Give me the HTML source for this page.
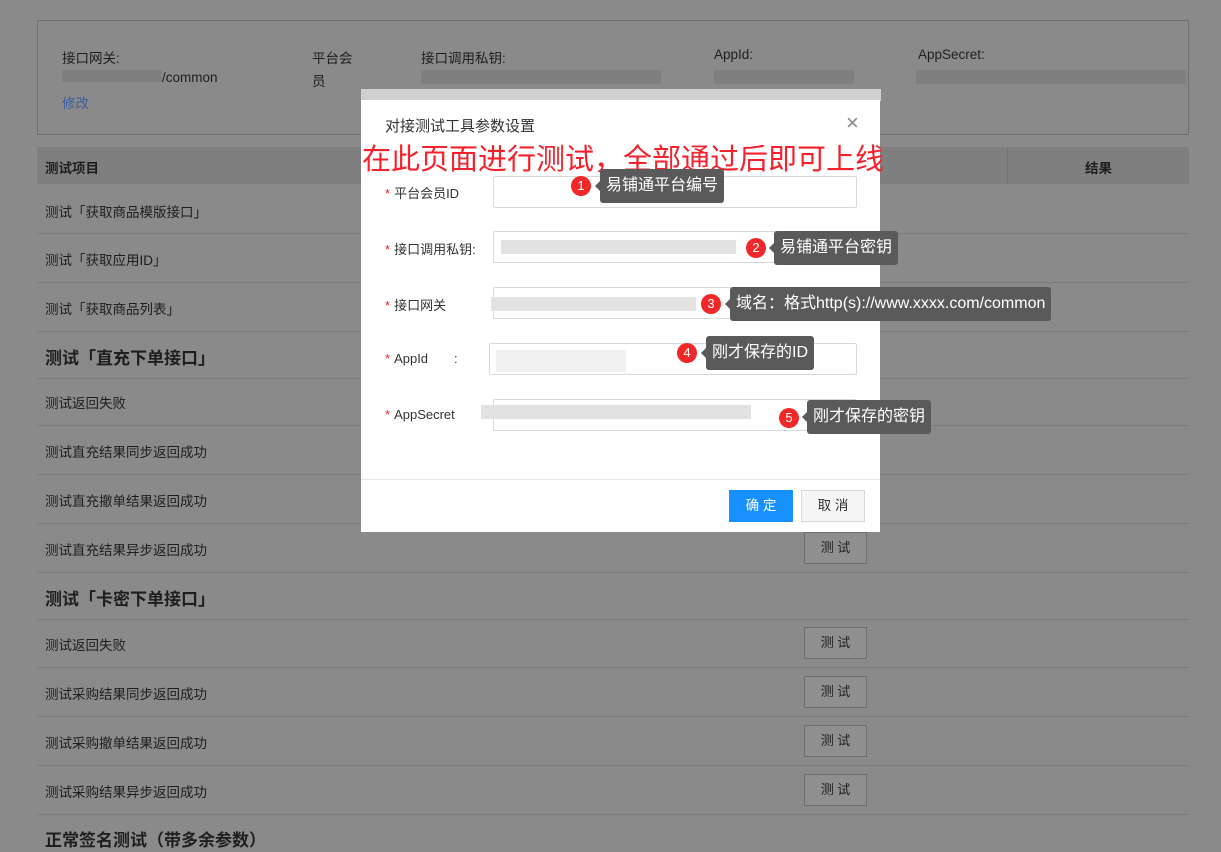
<!DOCTYPE html>
<html><head><meta charset="utf-8"><style>
*{margin:0;padding:0;box-sizing:border-box}
body{width:1221px;height:852px;overflow:hidden;background:#8a8a8a;font-family:"Liberation Sans","Noto Sans CJK SC",sans-serif;color:#1e1e1e;position:relative;font-size:13.5px}
.a{position:absolute;white-space:nowrap}
.line{position:absolute;left:37px;width:1152px;height:1px;background:#7c7c7c}
.btn{position:absolute;left:804px;width:63px;height:32px;border:1px solid #6e6e6e;background:#8f8f8f;font-size:13px;text-align:center;line-height:30px;color:#1e1e1e}
.sec{font-weight:bold;font-size:17px}
.dlg{position:absolute;left:361px;top:100px;width:519px;height:432px;background:#fff}
.lab{position:absolute;left:24px;font-size:13px;color:#333}
.lab b{color:#f5222d;font-weight:normal;margin-right:4px}
.inp{position:absolute;left:132px;width:364px;height:32px;border:1px solid #d9d9d9;border-radius:2px}
.blur{position:absolute;background:#e2e2e2;height:14px}
.tip{position:absolute;background:#5a5a5a;color:#fff;font-size:16px;height:34px;line-height:34px;padding:0 6px;border-radius:3px}
.tip:before{content:"";position:absolute;left:-5px;top:12px;border:5px solid transparent;border-left:0;border-right-color:#5a5a5a}
.num{position:absolute;width:20px;height:20px;border-radius:50%;background:#f02828;color:#fff;font-size:13px;text-align:center;line-height:20px}
</style></head><body>
<div class="a" style="left:37px;top:20px;width:1152px;height:115px;border:1px solid #6f6f6f"></div>
<div class="a" style="left:62px;top:47px">接口网关:</div>
<div class="a" style="left:62px;top:70px;color:#1e1e1e"><span style="display:inline-block;width:100px;height:12px;background:#7f7f7f"></span>/common</div>
<div class="a" style="left:62px;top:92px;color:#3b5ea0">修改</div>
<div class="a" style="left:312px;top:47px">平台会</div>
<div class="a" style="left:312px;top:70px">员</div>
<div class="a" style="left:421px;top:47px">接口调用私钥:</div>
<div class="a" style="left:421px;top:70px;width:240px;height:14px;background:#7f7f7f"></div>
<div class="a" style="left:714px;top:47px">AppId:</div>
<div class="a" style="left:714px;top:70px;width:140px;height:14px;background:#7f7f7f"></div>
<div class="a" style="left:918px;top:47px">AppSecret:</div>
<div class="a" style="left:916px;top:70px;width:270px;height:14px;background:#7f7f7f"></div>

<div class="a" style="left:37px;top:147px;width:1152px;height:37px;background:#7f7f7f"></div>
<div class="a" style="left:45px;top:157px;font-weight:bold">测试项目</div>
<div class="a" style="left:1007px;top:147px;width:1px;height:37px;background:#747474"></div>
<div class="a" style="left:1085px;top:157px;font-weight:bold">结果</div>

<div class="a" style="left:45px;top:201px">测试「获取商品模版接口」</div><div class="line" style="top:233px"></div>
<div class="a" style="left:45px;top:249px">测试「获取应用ID」</div><div class="line" style="top:282px"></div>
<div class="a" style="left:45px;top:298px">测试「获取商品列表」</div><div class="line" style="top:331px"></div>
<div class="a sec" style="left:45px;top:344px">测试「直充下单接口」</div><div class="line" style="top:378px"></div>
<div class="a" style="left:45px;top:392px">测试返回失败</div><div class="line" style="top:425px"></div>
<div class="a" style="left:45px;top:441px">测试直充结果同步返回成功</div><div class="line" style="top:474px"></div>
<div class="a" style="left:45px;top:490px">测试直充撤单结果返回成功</div><div class="line" style="top:523px"></div>
<div class="a" style="left:45px;top:539px">测试直充结果异步返回成功</div><div class="line" style="top:572px"></div>
<div class="btn" style="top:532px">测 试</div>
<div class="a sec" style="left:45px;top:585px">测试「卡密下单接口」</div><div class="line" style="top:619px"></div>
<div class="a" style="left:45px;top:634px">测试返回失败</div><div class="line" style="top:667px"></div><div class="btn" style="top:627px">测 试</div>
<div class="a" style="left:45px;top:683px">测试采购结果同步返回成功</div><div class="line" style="top:716px"></div><div class="btn" style="top:676px">测 试</div>
<div class="a" style="left:45px;top:732px">测试采购撤单结果返回成功</div><div class="line" style="top:765px"></div><div class="btn" style="top:725px">测 试</div>
<div class="a" style="left:45px;top:781px">测试采购结果异步返回成功</div><div class="line" style="top:814px"></div><div class="btn" style="top:774px">测 试</div>
<div class="a sec" style="left:45px;top:826px">正常签名测试（带多余参数）</div>

<div class="a" style="left:361px;top:89px;width:520px;height:12px;background:#d0d0d0"></div>
<div class="dlg">
 <div class="a" style="left:24px;top:15px;font-size:15px;color:#333">对接测试工具参数设置</div>
 <div class="a" style="left:485px;top:10px;font-size:22px;color:#888;font-weight:300">×</div>
 <div class="a" style="left:1px;top:36px;font-size:29px;color:#f5222d">在此页面进行测试，全部通过后即可上线</div>
 <div class="lab" style="top:83px"><b>*</b>平台会员ID</div>
 <div class="inp" style="top:76px"></div>
 <div class="lab" style="top:139px"><b>*</b>接口调用私钥:</div>
 <div class="inp" style="top:131px"></div><div class="blur" style="left:140px;top:140px;width:235px"></div>
 <div class="lab" style="top:195px"><b>*</b>接口网关</div>
 <div class="inp" style="top:187px"></div><div class="blur" style="left:130px;top:197px;width:205px"></div>
 <div class="lab" style="top:251px"><b>*</b>AppId<span style="margin-left:26px">:</span></div>
 <div class="inp" style="top:243px;left:128px;width:368px"></div><div class="blur" style="left:135px;top:250px;width:130px;background:#f0f0f0;height:22px"></div>
 <div class="lab" style="top:307px"><b>*</b>AppSecret</div>
 <div class="inp" style="top:299px"></div><div class="blur" style="left:120px;top:305px;width:270px"></div>
 <div class="a" style="left:0;top:379px;width:519px;height:1px;background:#e8e8e8"></div>
 <div class="a" style="left:368px;top:390px;width:64px;height:32px;background:#1890ff;color:#fff;text-align:center;line-height:32px">确 定</div>
 <div class="a" style="left:440px;top:390px;width:64px;height:32px;border:1px solid #d9d9d9;background:#f5f5f5;color:#333;text-align:center;line-height:30px">取 消</div>
</div>
<div class="num" style="left:571px;top:176px">1</div><div class="tip" style="left:600px;top:169px">易铺通平台编号</div>
<div class="num" style="left:746px;top:238px">2</div><div class="tip" style="left:774px;top:231px">易铺通平台密钥</div>
<div class="num" style="left:701px;top:294px">3</div><div class="tip" style="left:730px;top:287px">域名：格式http(s)://www.xxxx.com/common</div>
<div class="num" style="left:677px;top:343px">4</div><div class="tip" style="left:706px;top:336px">刚才保存的ID</div>
<div class="num" style="left:779px;top:408px">5</div><div class="tip" style="left:807px;top:400px">刚才保存的密钥</div>
</body></html>
